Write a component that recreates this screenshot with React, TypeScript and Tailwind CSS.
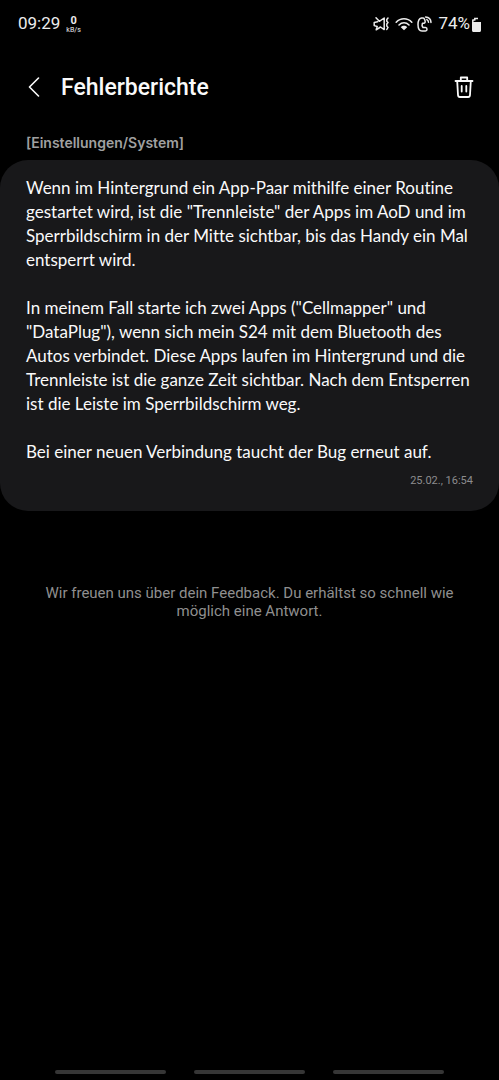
interface Report {
  category: string
  paragraphs: string[]
  createdAt: string
}

const report: Report = {
  category: '[Einstellungen/System]',
  paragraphs: [
    'Wenn im Hintergrund ein App-Paar mithilfe einer Routine\ngestartet wird, ist die "Trennleiste" der Apps im AoD und im\nSperrbildschirm in der Mitte sichtbar, bis das Handy ein Mal\nentsperrt wird.',
    'In meinem Fall starte ich zwei Apps ("Cellmapper" und\n"DataPlug"), wenn sich mein S24 mit dem Bluetooth des\nAutos verbindet. Diese Apps laufen im Hintergrund und die\nTrennleiste ist die ganze Zeit sichtbar. Nach dem Entsperren\nist die Leiste im Sperrbildschirm weg.',
    'Bei einer neuen Verbindung taucht der Bug erneut auf.'
  ],
  createdAt: '25.02., 16:54'
}

function MutedIcon() {
  return (
    <svg className="w-4 h-4" viewBox="0 0 16 16" fill="none" stroke="currentColor" strokeWidth="1.5" strokeLinejoin="round" strokeLinecap="round">
      <path d="M3 1.8L6.3 5.3L11.2 2V13.6L7.5 11L3.2 13.8L4.2 10.5L1.2 9.6V6.4L4.6 5.8" />
      <path d="M15 2L13.8 3.5V5.3L15 6.6L13.8 8V10L15 11.4L13.8 13.5" />
    </svg>
  )
}

function WifiIcon() {
  return (
    <svg className="w-[18px] h-[14px]" viewBox="0 0 18 14" fill="none" stroke="currentColor" strokeWidth="1.6" strokeLinecap="round">
      <path d="M1.2 5.2C5.6 0.6 12.4 0.6 16.8 5.2" />
      <path d="M4 8C6.9 5 11.1 5 14 8" />
      <path d="M5.8 10.2C7.6 8.3 10.4 8.3 12.2 10.2L9 13.2Z" fill="currentColor" stroke="none" />
    </svg>
  )
}

function CallIcon() {
  return (
    <svg className="w-[15px] h-4" viewBox="0 0 15 16" fill="none" stroke="currentColor" strokeWidth="1.5" strokeLinecap="round" strokeLinejoin="round">
      <path d="M6 2H4.5C2 2.6 1 5 1 8.5C1 12.5 2.2 15 5 15H8.5C9.6 15 10 14.4 10 13.3C10 12.1 9.6 11.5 8.5 11.5H6C5.1 10.4 5 8.2 5.4 7.2H7C8.2 7 8.4 6 8 4.6L7.4 3C7.1 2.3 6.7 2 6 2Z" />
      <path d="M8.6 1C11.6 1.2 13.8 3.4 14 6.4" />
      <path d="M9.8 3.6C10.8 4.2 11.4 5 11.5 6.2" />
    </svg>
  )
}

function BatteryIcon() {
  return (
    <svg className="w-[9px] h-[15px]" viewBox="0 0 9 15" fill="currentColor">
      <path d="M0 5H9V13.2C9 14.4 8.5 15 7.3 15H1.7C0.5 15 0 14.4 0 13.2Z" />
      <path d="M0.8 5V3.2L2.8 2.8V1.5H6" fill="none" stroke="currentColor" strokeWidth="1.5" />
    </svg>
  )
}

function StatusBar() {
  return (
    <div className="flex items-center justify-between h-12 px-[18px] text-[#ececec] text-[17px]">
      <div className="flex items-center gap-1.5">
        <span>09:29</span>
        <div className="flex flex-col items-center pt-px">
          <span className="text-[11px] leading-[10px] font-bold">0</span>
          <span className="text-[7px] leading-2">kB/s</span>
        </div>
      </div>
      <div className="flex items-center">
        <MutedIcon />
        <span className="ml-1.5"><WifiIcon /></span>
        <span className="ml-1"><CallIcon /></span>
        <span className="ml-1.5 mr-0.5">74%</span>
        <BatteryIcon />
      </div>
    </div>
  )
}

function Header() {
  return (
    <header className="flex items-center h-[78px] pl-[26px] pr-6">
      <button type="button" aria-label="Zurück" className="flex items-center justify-center w-4 h-6">
        <svg className="w-3 h-5" viewBox="0 0 12 20" fill="none" stroke="currentColor" strokeWidth="1.6" strokeLinecap="round" strokeLinejoin="round">
          <path d="M10.5 1L1.5 10L10.5 19" />
        </svg>
      </button>
      <h1 className="ml-[19px] pt-0.5 flex-1 text-[23px] leading-8 font-medium">Fehlerberichte</h1>
      <button type="button" aria-label="Löschen" className="flex items-center justify-center w-[22px] h-6">
        <svg className="w-5 h-[22px]" viewBox="0 0 20 22" fill="none" stroke="currentColor" strokeWidth="1.8" strokeLinecap="round" strokeLinejoin="round">
          <path d="M1.5 5H18.5" />
          <path d="M6.8 5V1.5H13.2V5" />
          <path d="M3.2 5L4 19C4.1 20.4 4.6 21 5.8 21H14.2C15.4 21 15.9 20.4 16 19L16.8 5" />
          <path d="M7.7 10V15.5M12.3 10V15.5" />
        </svg>
      </button>
    </header>
  )
}

export default function App() {
  return (
    <div className="flex flex-col min-h-screen bg-black text-[#fafafa] font-['Roboto',sans-serif]">
      <StatusBar />
      <Header />
      <main className="flex-1">
        <h2 className="px-[26px] pt-[5px] pb-[5px] text-sm leading-6 font-semibold text-[#a0a0a0] font-['Inter',sans-serif]">{report.category}</h2>
        <article className="px-[26px] pt-4 pb-5 rounded-[28px] bg-[#18181a]">
          <div className="space-y-6 text-[17px] leading-6 whitespace-pre-line [font-variant-ligatures:none] font-['Lato',sans-serif]">
            {report.paragraphs.map((paragraph) => (
              <p key={paragraph}>{paragraph}</p>
            ))}
          </div>
          <time className="block mt-[7px] text-right text-[11px] leading-5 text-[#8c8c8e]">{report.createdAt}</time>
        </article>
        <p className="mt-[73px] px-8 text-center text-[15px] leading-[18px] text-[#8f8f8f]">
          Wir freuen uns über dein Feedback. Du erhältst so schnell wie möglich eine Antwort.
        </p>
      </main>
      <footer className="flex justify-center gap-7 pb-1.5">
        <span className="w-[111px] h-1 rounded-full bg-[#363636]" />
        <span className="w-[111px] h-1 rounded-full bg-[#363636]" />
        <span className="w-[111px] h-1 rounded-full bg-[#363636]" />
      </footer>
    </div>
  )
}
